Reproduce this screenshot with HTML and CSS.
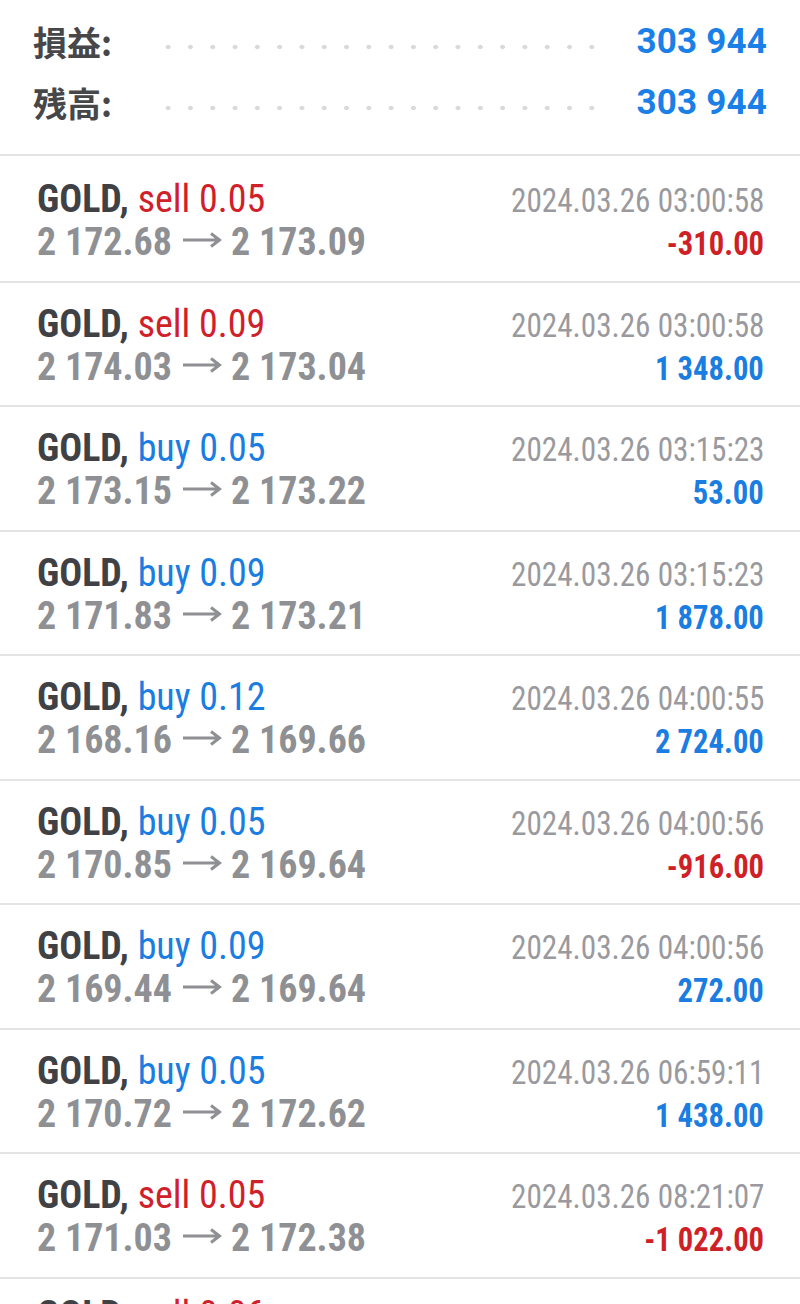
FILE: index.html
```html
<!DOCTYPE html>
<html lang="ja">
<head>
<meta charset="utf-8">
<link rel="stylesheet" href="styles.css">
</head>
<body>
<div class="summary">
  <div class="sum-row">
    <span class="sum-label">損益:</span>
    <span class="leader"></span>
    <span class="sum-value">303 944</span>
  </div>
  <div class="sum-row">
    <span class="sum-label">残高:</span>
    <span class="leader"></span>
    <span class="sum-value">303 944</span>
  </div>
</div>
<div class="deals">
  <div class="deal">
    <div class="line"><span class="c l"><b class="sym">GOLD,</b> <span class="sell">sell 0.05</span></span><span class="c r date">2024.03.26 03:00:58</span></div>
    <div class="line"><span class="c l price">2 172.68<svg class="arrow" viewBox="0 0 40 16"><path d="M1 8H37M29 1.5L37.5 8L29 14.5"/></svg>2 173.09</span><span class="c r amt neg">-310.00</span></div>
  </div>
  <div class="deal">
    <div class="line"><span class="c l"><b class="sym">GOLD,</b> <span class="sell">sell 0.09</span></span><span class="c r date">2024.03.26 03:00:58</span></div>
    <div class="line"><span class="c l price">2 174.03<svg class="arrow" viewBox="0 0 40 16"><path d="M1 8H37M29 1.5L37.5 8L29 14.5"/></svg>2 173.04</span><span class="c r amt pos">1 348.00</span></div>
  </div>
  <div class="deal">
    <div class="line"><span class="c l"><b class="sym">GOLD,</b> <span class="buy">buy 0.05</span></span><span class="c r date">2024.03.26 03:15:23</span></div>
    <div class="line"><span class="c l price">2 173.15<svg class="arrow" viewBox="0 0 40 16"><path d="M1 8H37M29 1.5L37.5 8L29 14.5"/></svg>2 173.22</span><span class="c r amt pos">53.00</span></div>
  </div>
  <div class="deal">
    <div class="line"><span class="c l"><b class="sym">GOLD,</b> <span class="buy">buy 0.09</span></span><span class="c r date">2024.03.26 03:15:23</span></div>
    <div class="line"><span class="c l price">2 171.83<svg class="arrow" viewBox="0 0 40 16"><path d="M1 8H37M29 1.5L37.5 8L29 14.5"/></svg>2 173.21</span><span class="c r amt pos">1 878.00</span></div>
  </div>
  <div class="deal">
    <div class="line"><span class="c l"><b class="sym">GOLD,</b> <span class="buy">buy 0.12</span></span><span class="c r date">2024.03.26 04:00:55</span></div>
    <div class="line"><span class="c l price">2 168.16<svg class="arrow" viewBox="0 0 40 16"><path d="M1 8H37M29 1.5L37.5 8L29 14.5"/></svg>2 169.66</span><span class="c r amt pos">2 724.00</span></div>
  </div>
  <div class="deal">
    <div class="line"><span class="c l"><b class="sym">GOLD,</b> <span class="buy">buy 0.05</span></span><span class="c r date">2024.03.26 04:00:56</span></div>
    <div class="line"><span class="c l price">2 170.85<svg class="arrow" viewBox="0 0 40 16"><path d="M1 8H37M29 1.5L37.5 8L29 14.5"/></svg>2 169.64</span><span class="c r amt neg">-916.00</span></div>
  </div>
  <div class="deal">
    <div class="line"><span class="c l"><b class="sym">GOLD,</b> <span class="buy">buy 0.09</span></span><span class="c r date">2024.03.26 04:00:56</span></div>
    <div class="line"><span class="c l price">2 169.44<svg class="arrow" viewBox="0 0 40 16"><path d="M1 8H37M29 1.5L37.5 8L29 14.5"/></svg>2 169.64</span><span class="c r amt pos">272.00</span></div>
  </div>
  <div class="deal">
    <div class="line"><span class="c l"><b class="sym">GOLD,</b> <span class="buy">buy 0.05</span></span><span class="c r date">2024.03.26 06:59:11</span></div>
    <div class="line"><span class="c l price">2 170.72<svg class="arrow" viewBox="0 0 40 16"><path d="M1 8H37M29 1.5L37.5 8L29 14.5"/></svg>2 172.62</span><span class="c r amt pos">1 438.00</span></div>
  </div>
  <div class="deal">
    <div class="line"><span class="c l"><b class="sym">GOLD,</b> <span class="sell">sell 0.05</span></span><span class="c r date">2024.03.26 08:21:07</span></div>
    <div class="line"><span class="c l price">2 171.03<svg class="arrow" viewBox="0 0 40 16"><path d="M1 8H37M29 1.5L37.5 8L29 14.5"/></svg>2 172.38</span><span class="c r amt neg">-1 022.00</span></div>
  </div>
  <div class="deal">
    <div class="line"><span class="c l"><b class="sym">GOLD,</b> <span class="sell">sell 0.06</span></span><span class="c r date">2024.03.26 08:21:07</span></div>
    <div class="line"><span class="c l price">2 171.03<svg class="arrow" viewBox="0 0 40 16"><path d="M1 8H37M29 1.5L37.5 8L29 14.5"/></svg>2 172.38</span><span class="c r amt neg">-1 022.00</span></div>
  </div>
</div>
</body>
</html>
```

FILE: styles.css
```css
html, body {
  margin: 0;
  padding: 0;
  background: #ffffff;
  overflow: hidden;
}
body {
  width: 800px;
  height: 1304px;
  font-family: "Roboto Condensed", Roboto, "Noto Sans", sans-serif;
}

.summary {
  padding: 11px 33px 0 33px;
  height: 143px;
}
.sum-row {
  display: flex;
  align-items: center;
  height: 61px;
}
.sum-label {
  width: 124px;
  font-family: "Noto Sans CJK JP", "Noto Sans", sans-serif;
  font-weight: 700;
  font-size: 34px;
  color: #47474a;
  line-height: 40px;
}
.leader {
  flex: 1;
  height: 6px;
  margin: 10px 34px 0 0;
  background-image: radial-gradient(circle, #d9d9d9 2px, transparent 2.6px);
  background-size: 22.3px 6px;
  background-position: 0 0;
}
.sum-value {
  font-family: Roboto, "Noto Sans", sans-serif;
  font-weight: 700;
  font-size: 35px;
  color: #1a7fe6;
  letter-spacing: 0.2px;
}

.deals {
  border-top: 2px solid #e4e4e4;
}
.deal {
  padding: 20px 36px 16.5px 37px;
  border-bottom: 2px solid #e4e4e4;
}
.deal:first-child {
  padding-top: 22px;
}
.deal:last-child {
  padding-top: 15px;
}
.line {
  display: flex;
  justify-content: space-between;
  align-items: baseline;
  height: 43px;
  line-height: 43px;
  white-space: nowrap;
}
.c {
  display: inline-block;
}
.l {
  font-size: 38px;
}
.r {
  transform-origin: right center;
}
.sym {
  font-weight: 700;
  color: #404145;
}
.sell { color: #d0202a; }
.buy { color: #1a7de2; }
.price {
  color: #8f9094;
  font-weight: 700;
}
.arrow {
  width: 40px;
  height: 16px;
  margin: 0 9px 0 10px;
  vertical-align: 7px;
  fill: none;
  stroke: #8f9094;
  stroke-width: 3;
}
.date {
  font-size: 33px;
  color: #9a9a9e;
  transform: scaleX(0.944);
}
.amt {
  font-size: 34px;
  font-weight: 700;
  transform: scaleX(0.9);
}
.neg { color: #cf1f27; }
.pos { color: #1a7de2; }
```
